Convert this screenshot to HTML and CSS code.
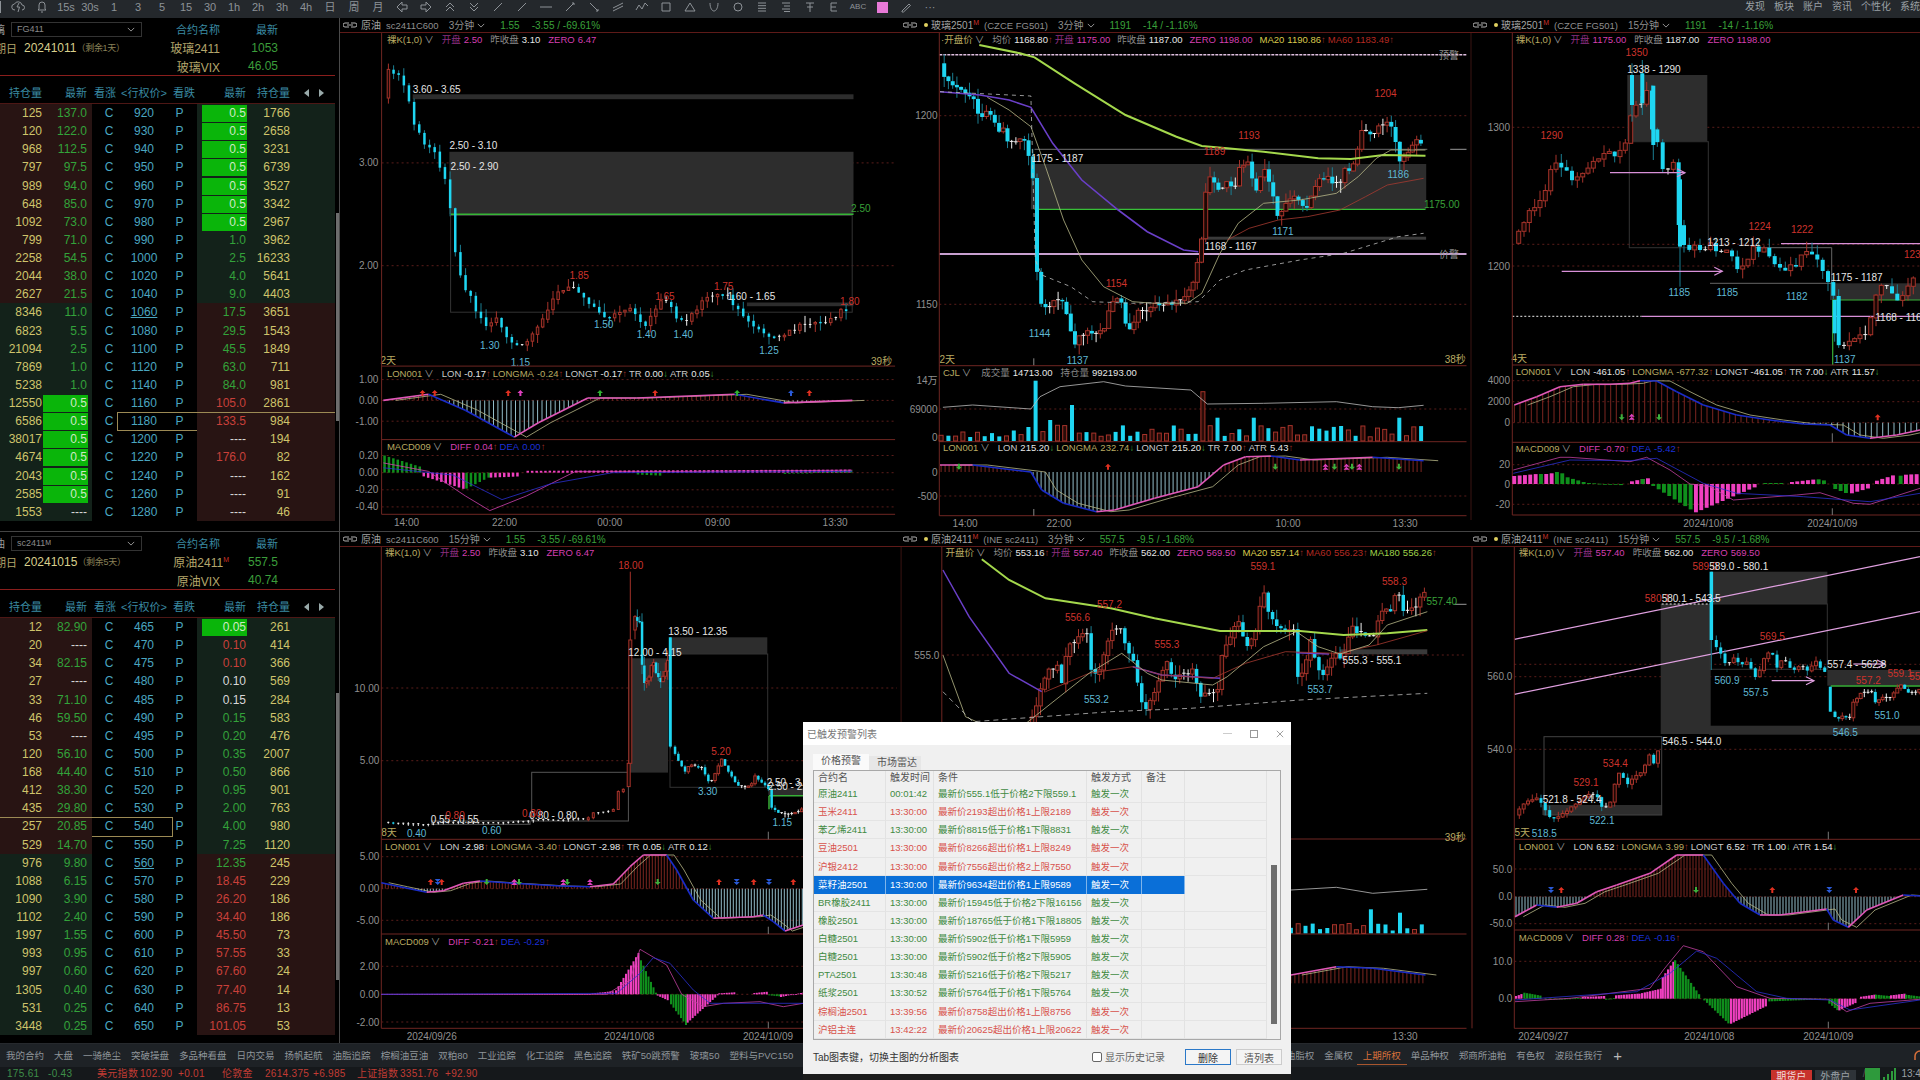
FILE: index.html
```html
<!DOCTYPE html>
<html lang="zh-CN">
<head>
<meta charset="utf-8">
<title>期权行情</title>
<link rel="stylesheet" href="styles.css">
</head>
<body>
<div class="app">
  <header class="toolbar">
    <span class="tick"></span>
    <span class="tb"><svg class="ic" viewBox="0 0 14 12"><path d="M4 9a3 3 0 0 1-.5-6A4 4 0 0 1 11 4a2.5 2.5 0 0 1 0 5M8 2 6 6h2.5L7 11"/></svg></span>
    <span class="tb"><svg class="ic" viewBox="0 0 14 12"><path d="M7 1a3 3 0 0 1 3 3v4l1 1H3l1-1V4a3 3 0 0 1 3-3ZM6 11h2"/></svg></span>
    <span class="tb">15s</span><span class="tb">30s</span><span class="tb">1</span><span class="tb">3</span><span class="tb">5</span><span class="tb">15</span><span class="tb">30</span><span class="tb">1h</span><span class="tb">2h</span><span class="tb">3h</span><span class="tb">4h</span><span class="tb">日</span><span class="tb">周</span><span class="tb">月</span>
    <span class="tb"><svg class="ic" viewBox="0 0 14 12"><path d="M7 1 2 6l5 5V8h5V4H7Z"/></svg></span>
    <span class="tb"><svg class="ic" viewBox="0 0 14 12"><path d="m7 1 5 5-5 5V8H2V4h5Z"/></svg></span>
    <span class="tb"><svg class="ic" viewBox="0 0 14 12"><path d="M3 6l4-4 4 4M3 10l4-4 4 4"/></svg></span>
    <span class="tb"><svg class="ic" viewBox="0 0 14 12"><path d="M3 2l4 4 4-4M3 6l4 4 4-4"/></svg></span>
    <span class="tb"><svg class="ic" viewBox="0 0 14 12"><path d="M3 10 11 2"/></svg></span>
    <span class="tb"><svg class="ic" viewBox="0 0 14 12"><path d="M3 10 11 2"/></svg></span>
    <span class="tb"><svg class="ic" viewBox="0 0 14 12"><path d="M1 6h12"/></svg></span>
    <span class="tb"><svg class="ic" viewBox="0 0 14 12"><path d="M3 10 11 2M9 2h2v2"/></svg></span>
    <span class="tb"><svg class="ic" viewBox="0 0 14 12"><path d="M3 2l8 8M9 10h2V8"/></svg></span>
    <span class="tb"><svg class="ic" viewBox="0 0 14 12"><path d="M2 7 12 2M2 10 12 5"/></svg></span>
    <span class="tb"><svg class="ic" viewBox="0 0 14 12"><path d="M1 9 4 4l3 4 3-6 3 3"/></svg></span>
    <span class="tb"><svg class="ic" viewBox="0 0 14 12"><path d="M3 2h8v8H3Z"/></svg></span>
    <span class="tb"><svg class="ic" viewBox="0 0 14 12"><path d="M7 2l5 8H2Z"/></svg></span>
    <span class="tb"><svg class="ic" viewBox="0 0 14 12"><path d="M3 2c0 5 2 8 4 8s4-3 4-8"/></svg></span>
    <span class="tb"><svg class="ic" viewBox="0 0 14 12"><circle cx="7" cy="6" r="4"/></svg></span>
    <span class="tb"><svg class="ic" viewBox="0 0 14 12"><path d="M3 2h8M3 4.700h8M3 7.300h8M3 10h8"/></svg></span>
    <span class="tb"><svg class="ic" viewBox="0 0 14 12"><path d="M3 2h8M5 5h6M3 8h8M5 10.500h6"/></svg></span>
    <span class="tb"><svg class="ic" viewBox="0 0 14 12"><path d="M3 2h8M7 2v9M4 6h6"/></svg></span>
    <span class="tb"><svg class="ic" viewBox="0 0 14 12"><path d="M4 2v8M4 2h6M4 6h5M4 10h6"/></svg></span>
    <span class="tb tb-sm">ABC</span>
    <span class="tb"><i class="swatch"></i></span>
    <span class="tb"><svg class="ic" viewBox="0 0 14 12"><path d="M3 10 10 3l1.500 1.500L4.500 11 3 11Z"/></svg></span>
    <span class="tb">···</span>
    <nav class="menu"><span>发现</span><span>板块</span><span>账户</span><span>资讯</span><span>个性化</span><span>系统工具</span></nav>
  </header>

  <main class="board">
    <section class="opt">
      <div class="opt-head">
        <div class="h-c1"><span class="cut">玻璃</span><span class="dd">FG411<svg class="chev" viewBox="0 0 10 6"><path d="M1 1l4 4 4-4"/></svg></span></div>
        <div class="h-c2 hcol">合约名称</div><div class="h-c3 hcol">最新</div>
        <div class="h-c1"><span class="cut2">到期日</span><span class="date">20241011</span><span class="rem">（剩余1天）</span></div>
        <div class="h-c2 tan">玻璃2411</div><div class="h-c3 grn-t">1053</div>
        <div class="h-c1"></div>
        <div class="h-c2 tan">玻璃VIX</div><div class="h-c3 grn-t">46.05</div>
      </div>
      <div class="row hrow"><div class="side"><span class="oi">持仓量</span><span class="ltp">最新</span></div><span class="cp">看涨</span><span class="k">&lt;行权价&gt;</span><span class="cp">看跌</span><div class="side rside"><span class="ltp">最新</span><span class="oi">持仓量</span><svg class="pg" viewBox="0 0 20 8"><path d="M5 0v8L0 4ZM15 0v8l5-4Z"/></svg></div></div>
      <div class="rows">
        <div class="row"><div class="side red"><span class="oi">125</span><span class="ltp g">137.0</span></div><span class="cp">C</span><span class="k">920</span><span class="cp">P</span><div class="side rside grn"><span class="ltp hi">0.5</span><span class="oi">1766</span></div></div>
        <div class="row"><div class="side red"><span class="oi">120</span><span class="ltp g">122.0</span></div><span class="cp">C</span><span class="k">930</span><span class="cp">P</span><div class="side rside grn"><span class="ltp hi">0.5</span><span class="oi">2658</span></div></div>
        <div class="row"><div class="side red"><span class="oi">968</span><span class="ltp g">112.5</span></div><span class="cp">C</span><span class="k">940</span><span class="cp">P</span><div class="side rside grn"><span class="ltp hi">0.5</span><span class="oi">3231</span></div></div>
        <div class="row"><div class="side red"><span class="oi">797</span><span class="ltp g">97.5</span></div><span class="cp">C</span><span class="k">950</span><span class="cp">P</span><div class="side rside grn"><span class="ltp hi">0.5</span><span class="oi">6739</span></div></div>
        <div class="row"><div class="side red"><span class="oi">989</span><span class="ltp g">94.0</span></div><span class="cp">C</span><span class="k">960</span><span class="cp">P</span><div class="side rside grn"><span class="ltp hi">0.5</span><span class="oi">3527</span></div></div>
        <div class="row"><div class="side red"><span class="oi">648</span><span class="ltp g">85.0</span></div><span class="cp">C</span><span class="k">970</span><span class="cp">P</span><div class="side rside grn"><span class="ltp hi">0.5</span><span class="oi">3342</span></div></div>
        <div class="row"><div class="side red"><span class="oi">1092</span><span class="ltp g">73.0</span></div><span class="cp">C</span><span class="k">980</span><span class="cp">P</span><div class="side rside grn"><span class="ltp hi">0.5</span><span class="oi">2967</span></div></div>
        <div class="row"><div class="side red"><span class="oi">799</span><span class="ltp g">71.0</span></div><span class="cp">C</span><span class="k">990</span><span class="cp">P</span><div class="side rside grn"><span class="ltp g">1.0</span><span class="oi">3962</span></div></div>
        <div class="row"><div class="side red"><span class="oi">2258</span><span class="ltp g">54.5</span></div><span class="cp">C</span><span class="k">1000</span><span class="cp">P</span><div class="side rside grn"><span class="ltp g">2.5</span><span class="oi">16233</span></div></div>
        <div class="row"><div class="side red"><span class="oi">2044</span><span class="ltp g">38.0</span></div><span class="cp">C</span><span class="k">1020</span><span class="cp">P</span><div class="side rside grn"><span class="ltp g">4.0</span><span class="oi">5641</span></div></div>
        <div class="row"><div class="side red"><span class="oi">2627</span><span class="ltp g">21.5</span></div><span class="cp">C</span><span class="k">1040</span><span class="cp">P</span><div class="side rside grn"><span class="ltp g">9.0</span><span class="oi">4403</span></div></div>
        <div class="row"><div class="side grn"><span class="oi">8346</span><span class="ltp g">11.0</span></div><span class="cp">C</span><span class="k atm">1060</span><span class="cp">P</span><div class="side rside red"><span class="ltp g">17.5</span><span class="oi">3651</span></div></div>
        <div class="row"><div class="side grn"><span class="oi">6823</span><span class="ltp g">5.5</span></div><span class="cp">C</span><span class="k">1080</span><span class="cp">P</span><div class="side rside red"><span class="ltp g">29.5</span><span class="oi">1543</span></div></div>
        <div class="row"><div class="side grn"><span class="oi">21094</span><span class="ltp g">2.5</span></div><span class="cp">C</span><span class="k">1100</span><span class="cp">P</span><div class="side rside red"><span class="ltp g">45.5</span><span class="oi">1849</span></div></div>
        <div class="row"><div class="side grn"><span class="oi">7869</span><span class="ltp g">1.0</span></div><span class="cp">C</span><span class="k">1120</span><span class="cp">P</span><div class="side rside red"><span class="ltp g">63.0</span><span class="oi">711</span></div></div>
        <div class="row"><div class="side grn"><span class="oi">5238</span><span class="ltp g">1.0</span></div><span class="cp">C</span><span class="k">1140</span><span class="cp">P</span><div class="side rside red"><span class="ltp g">84.0</span><span class="oi">981</span></div></div>
        <div class="row"><div class="side grn"><span class="oi">12550</span><span class="ltp hi">0.5</span></div><span class="cp">C</span><span class="k">1160</span><span class="cp">P</span><div class="side rside red"><span class="ltp r">105.0</span><span class="oi">2861</span></div></div>
        <div class="row sel-put"><div class="side grn"><span class="oi">6586</span><span class="ltp hi">0.5</span></div><span class="cp">C</span><span class="k">1180</span><span class="cp">P</span><div class="side rside red"><span class="ltp r">133.5</span><span class="oi">984</span></div></div>
        <div class="row"><div class="side grn"><span class="oi">38017</span><span class="ltp hi">0.5</span></div><span class="cp">C</span><span class="k">1200</span><span class="cp">P</span><div class="side rside red"><span class="ltp w">----</span><span class="oi">194</span></div></div>
        <div class="row"><div class="side grn"><span class="oi">4674</span><span class="ltp hi">0.5</span></div><span class="cp">C</span><span class="k">1220</span><span class="cp">P</span><div class="side rside red"><span class="ltp r">176.0</span><span class="oi">82</span></div></div>
        <div class="row"><div class="side grn"><span class="oi">2043</span><span class="ltp hi">0.5</span></div><span class="cp">C</span><span class="k">1240</span><span class="cp">P</span><div class="side rside red"><span class="ltp w">----</span><span class="oi">162</span></div></div>
        <div class="row"><div class="side grn"><span class="oi">2585</span><span class="ltp hi">0.5</span></div><span class="cp">C</span><span class="k">1260</span><span class="cp">P</span><div class="side rside red"><span class="ltp w">----</span><span class="oi">91</span></div></div>
        <div class="row"><div class="side grn"><span class="oi">1553</span><span class="ltp w">----</span></div><span class="cp">C</span><span class="k">1280</span><span class="cp">P</span><div class="side rside red"><span class="ltp w">----</span><span class="oi">46</span></div></div>
      </div>
      <span class="sb sb-top"></span>
    </section>

    <section class="panel">
      <div class="title"><svg class="link" viewBox="0 0 14 6"><path d="M6 1H2a2 2 0 0 0 0 4h4M8 1h4a2 2 0 0 1 0 4H8M4 3h6"/></svg><span class="t-n">原油</span><span class="t-code">sc2411C600</span><span class="t-per">3分钟<svg class="chev" viewBox="0 0 10 6"><path d="M1 1l4 4 4-4"/></svg></span><span class="t-px">1.55</span><span class="t-chg">-3.55 / -69.61%</span></div>
      <svg class="stage" id="c1"></svg>
    </section>
    <section class="panel">
      <div class="title"><svg class="link" viewBox="0 0 14 6"><path d="M6 1H2a2 2 0 0 0 0 4h4M8 1h4a2 2 0 0 1 0 4H8M4 3h6"/></svg><i class="dot"></i><span class="t-n">玻璃2501<sup>M</sup></span><span class="t-code">(CZCE FG501)</span><span class="t-per">3分钟<svg class="chev" viewBox="0 0 10 6"><path d="M1 1l4 4 4-4"/></svg></span><span class="t-px">1191</span><span class="t-chg">-14 / -1.16%</span></div>
      <svg class="stage" id="c2"></svg>
    </section>
    <section class="panel panel-last">
      <div class="title"><svg class="link" viewBox="0 0 14 6"><path d="M6 1H2a2 2 0 0 0 0 4h4M8 1h4a2 2 0 0 1 0 4H8M4 3h6"/></svg><i class="dot"></i><span class="t-n">玻璃2501<sup>M</sup></span><span class="t-code">(CZCE FG501)</span><span class="t-per">15分钟<svg class="chev" viewBox="0 0 10 6"><path d="M1 1l4 4 4-4"/></svg></span><span class="t-px">1191</span><span class="t-chg">-14 / -1.16%</span></div>
      <svg class="stage" id="c3"></svg>
    </section>

    <section class="opt opt-low">
      <div class="opt-head">
        <div class="h-c1"><span class="cut">原油</span><span class="dd">sc2411<sup>M</sup><svg class="chev" viewBox="0 0 10 6"><path d="M1 1l4 4 4-4"/></svg></span></div>
        <div class="h-c2 hcol">合约名称</div><div class="h-c3 hcol">最新</div>
        <div class="h-c1"><span class="cut2">到期日</span><span class="date">20241015</span><span class="rem">（剩余5天）</span></div>
        <div class="h-c2 tan over">原油2411<sup>M</sup></div><div class="h-c3 grn-t">557.5</div>
        <div class="h-c1"></div>
        <div class="h-c2 tan">原油VIX</div><div class="h-c3 grn-t">40.74</div>
      </div>
      <div class="row hrow"><div class="side"><span class="oi">持仓量</span><span class="ltp">最新</span></div><span class="cp">看涨</span><span class="k">&lt;行权价&gt;</span><span class="cp">看跌</span><div class="side rside"><span class="ltp">最新</span><span class="oi">持仓量</span><svg class="pg" viewBox="0 0 20 8"><path d="M5 0v8L0 4ZM15 0v8l5-4Z"/></svg></div></div>
      <div class="rows">
        <div class="row"><div class="side red"><span class="oi">12</span><span class="ltp g">82.90</span></div><span class="cp">C</span><span class="k">465</span><span class="cp">P</span><div class="side rside grn"><span class="ltp hi">0.05</span><span class="oi">261</span></div></div>
        <div class="row"><div class="side red"><span class="oi">20</span><span class="ltp w">----</span></div><span class="cp">C</span><span class="k">470</span><span class="cp">P</span><div class="side rside grn"><span class="ltp r">0.10</span><span class="oi">414</span></div></div>
        <div class="row"><div class="side red"><span class="oi">34</span><span class="ltp g">82.15</span></div><span class="cp">C</span><span class="k">475</span><span class="cp">P</span><div class="side rside grn"><span class="ltp r">0.10</span><span class="oi">366</span></div></div>
        <div class="row"><div class="side red"><span class="oi">27</span><span class="ltp w">----</span></div><span class="cp">C</span><span class="k">480</span><span class="cp">P</span><div class="side rside grn"><span class="ltp w">0.10</span><span class="oi">569</span></div></div>
        <div class="row"><div class="side red"><span class="oi">33</span><span class="ltp g">71.10</span></div><span class="cp">C</span><span class="k">485</span><span class="cp">P</span><div class="side rside grn"><span class="ltp w">0.15</span><span class="oi">284</span></div></div>
        <div class="row"><div class="side red"><span class="oi">46</span><span class="ltp g">59.50</span></div><span class="cp">C</span><span class="k">490</span><span class="cp">P</span><div class="side rside grn"><span class="ltp g">0.15</span><span class="oi">583</span></div></div>
        <div class="row"><div class="side red"><span class="oi">53</span><span class="ltp w">----</span></div><span class="cp">C</span><span class="k">495</span><span class="cp">P</span><div class="side rside grn"><span class="ltp g">0.20</span><span class="oi">476</span></div></div>
        <div class="row"><div class="side red"><span class="oi">120</span><span class="ltp g">56.10</span></div><span class="cp">C</span><span class="k">500</span><span class="cp">P</span><div class="side rside grn"><span class="ltp g">0.35</span><span class="oi">2007</span></div></div>
        <div class="row"><div class="side red"><span class="oi">168</span><span class="ltp g">44.40</span></div><span class="cp">C</span><span class="k">510</span><span class="cp">P</span><div class="side rside grn"><span class="ltp g">0.50</span><span class="oi">866</span></div></div>
        <div class="row"><div class="side red"><span class="oi">412</span><span class="ltp g">38.30</span></div><span class="cp">C</span><span class="k">520</span><span class="cp">P</span><div class="side rside grn"><span class="ltp g">0.95</span><span class="oi">901</span></div></div>
        <div class="row"><div class="side red"><span class="oi">435</span><span class="ltp g">29.80</span></div><span class="cp">C</span><span class="k">530</span><span class="cp">P</span><div class="side rside grn"><span class="ltp g">2.00</span><span class="oi">763</span></div></div>
        <div class="row sel-call"><div class="side red"><span class="oi">257</span><span class="ltp g">20.85</span></div><span class="cp">C</span><span class="k">540</span><span class="cp">P</span><div class="side rside grn"><span class="ltp g">4.00</span><span class="oi">980</span></div></div>
        <div class="row"><div class="side red"><span class="oi">529</span><span class="ltp g">14.70</span></div><span class="cp">C</span><span class="k">550</span><span class="cp">P</span><div class="side rside grn"><span class="ltp g">7.25</span><span class="oi">1120</span></div></div>
        <div class="row"><div class="side grn"><span class="oi">976</span><span class="ltp g">9.80</span></div><span class="cp">C</span><span class="k atm">560</span><span class="cp">P</span><div class="side rside red"><span class="ltp g">12.35</span><span class="oi">245</span></div></div>
        <div class="row"><div class="side grn"><span class="oi">1088</span><span class="ltp g">6.15</span></div><span class="cp">C</span><span class="k">570</span><span class="cp">P</span><div class="side rside red"><span class="ltp r">18.45</span><span class="oi">229</span></div></div>
        <div class="row"><div class="side grn"><span class="oi">1090</span><span class="ltp g">3.90</span></div><span class="cp">C</span><span class="k">580</span><span class="cp">P</span><div class="side rside red"><span class="ltp r">26.20</span><span class="oi">186</span></div></div>
        <div class="row"><div class="side grn"><span class="oi">1102</span><span class="ltp g">2.40</span></div><span class="cp">C</span><span class="k">590</span><span class="cp">P</span><div class="side rside red"><span class="ltp r">34.40</span><span class="oi">186</span></div></div>
        <div class="row"><div class="side grn"><span class="oi">1997</span><span class="ltp g">1.55</span></div><span class="cp">C</span><span class="k">600</span><span class="cp">P</span><div class="side rside red"><span class="ltp r">45.50</span><span class="oi">73</span></div></div>
        <div class="row"><div class="side grn"><span class="oi">993</span><span class="ltp g">0.95</span></div><span class="cp">C</span><span class="k">610</span><span class="cp">P</span><div class="side rside red"><span class="ltp r">57.55</span><span class="oi">33</span></div></div>
        <div class="row"><div class="side grn"><span class="oi">997</span><span class="ltp g">0.60</span></div><span class="cp">C</span><span class="k">620</span><span class="cp">P</span><div class="side rside red"><span class="ltp r">67.60</span><span class="oi">24</span></div></div>
        <div class="row"><div class="side grn"><span class="oi">1305</span><span class="ltp g">0.40</span></div><span class="cp">C</span><span class="k">630</span><span class="cp">P</span><div class="side rside red"><span class="ltp r">77.40</span><span class="oi">14</span></div></div>
        <div class="row"><div class="side grn"><span class="oi">531</span><span class="ltp g">0.25</span></div><span class="cp">C</span><span class="k">640</span><span class="cp">P</span><div class="side rside red"><span class="ltp r">86.75</span><span class="oi">13</span></div></div>
        <div class="row"><div class="side grn"><span class="oi">3448</span><span class="ltp g">0.25</span></div><span class="cp">C</span><span class="k">650</span><span class="cp">P</span><div class="side rside red"><span class="ltp r">101.05</span><span class="oi">53</span></div></div>
      </div>
      <span class="sb sb-low"></span>
    </section>

    <section class="panel panel-low">
      <div class="title"><svg class="link" viewBox="0 0 14 6"><path d="M6 1H2a2 2 0 0 0 0 4h4M8 1h4a2 2 0 0 1 0 4H8M4 3h6"/></svg><span class="t-n">原油</span><span class="t-code">sc2411C600</span><span class="t-per">15分钟<svg class="chev" viewBox="0 0 10 6"><path d="M1 1l4 4 4-4"/></svg></span><span class="t-px">1.55</span><span class="t-chg">-3.55 / -69.61%</span></div>
      <svg class="stage" id="c4"></svg>
    </section>
    <section class="panel panel-low">
      <div class="title"><svg class="link" viewBox="0 0 14 6"><path d="M6 1H2a2 2 0 0 0 0 4h4M8 1h4a2 2 0 0 1 0 4H8M4 3h6"/></svg><i class="dot"></i><span class="t-n">原油2411<sup>M</sup></span><span class="t-code">(INE sc2411)</span><span class="t-per">3分钟<svg class="chev" viewBox="0 0 10 6"><path d="M1 1l4 4 4-4"/></svg></span><span class="t-px">557.5</span><span class="t-chg">-9.5 / -1.68%</span></div>
      <svg class="stage" id="c5"></svg>
    </section>
    <section class="panel panel-low panel-last">
      <div class="title"><svg class="link" viewBox="0 0 14 6"><path d="M6 1H2a2 2 0 0 0 0 4h4M8 1h4a2 2 0 0 1 0 4H8M4 3h6"/></svg><i class="dot"></i><span class="t-n">原油2411<sup>M</sup></span><span class="t-code">(INE sc2411)</span><span class="t-per">15分钟<svg class="chev" viewBox="0 0 10 6"><path d="M1 1l4 4 4-4"/></svg></span><span class="t-px">557.5</span><span class="t-chg">-9.5 / -1.68%</span></div>
      <svg class="stage" id="c6"></svg>
    </section>
  </main>

  <nav class="tabs">
    <span class="tab first">我的合约</span><span class="tab">大盘</span><span class="tab">一骑绝尘</span><span class="tab">突破操盘</span><span class="tab">多品种看盘</span><span class="tab">日内交易</span><span class="tab">扬帆起航</span><span class="tab">油脂追踪</span><span class="tab">棕榈油豆油</span><span class="tab">双粕80</span><span class="tab">工业追踪</span><span class="tab">化工追踪</span><span class="tab">黑色追踪</span><span class="tab">铁矿50跳预警</span><span class="tab">玻璃50</span><span class="tab">塑料与PVC150</span>
    <span class="tab push">油脂权</span><span class="tab">金属权</span><span class="tab active">上期所权</span><span class="tab">单品种权</span><span class="tab">郑商所油粕</span><span class="tab">有色权</span><span class="tab">波段任我行</span><span class="tab plus">+</span>
    <svg class="head" viewBox="0 0 14 14"><path d="M2 11V7a5 5 0 0 1 10 0v4"/></svg>
  </nav>

  <footer class="status">
    <span class="st g w-a">175.61</span><span class="st g w-b">-0.43</span>
    <span class="st r w-c">美元指数</span><span class="st r w-d">102.90</span><span class="st r w-e">+0.01</span>
    <span class="st r w-f">伦敦金</span><span class="st r w-g">2614.375</span><span class="st r w-h">+6.985</span>
    <span class="st r w-i">上证指数</span><span class="st r w-j">3351.76</span><span class="st r">+92.90</span>
    <span class="acct acct-on">期货户</span><span class="acct">外盘户</span><span class="slash">/</span>
    <svg class="net" viewBox="0 0 15 12"><path d="M0 0h15v12H0Z"/></svg>
    <svg class="sig" viewBox="0 0 14 12"><path d="M1 9h2v3H1ZM5 6h2v6H5ZM9 3h2v9H9ZM12 0h2v12h-2Z"/></svg>
    <span class="clock">13:42:30</span>
  </footer>

  <div class="modal">
    <div class="m-title"><span>已触发预警列表</span><span class="m-btns"><i class="m-min"></i><i class="m-max"></i><svg class="m-x" viewBox="0 0 10 10"><path d="M1 1l8 8M9 1l-8 8"/></svg></span></div>
    <div class="m-tabs"><span class="m-tab on">价格预警</span><span class="m-tab">市场雷达</span></div>
    <div class="m-table">
      <div class="m-row m-head"><span>合约名</span><span>触发时间</span><span>条件</span><span>触发方式</span><span>备注</span><span></span></div>
      <div class="m-row ok"><span>原油2411</span><span>00:01:42</span><span>最新价555.1低于价格2下限559.1</span><span>触发一次</span><span></span><span></span></div>
      <div class="m-row up"><span>玉米2411</span><span>13:30:00</span><span>最新价2193超出价格1上限2189</span><span>触发一次</span><span></span><span></span></div>
      <div class="m-row ok"><span>苯乙烯2411</span><span>13:30:00</span><span>最新价8815低于价格1下限8831</span><span>触发一次</span><span></span><span></span></div>
      <div class="m-row up"><span>豆油2501</span><span>13:30:00</span><span>最新价8266超出价格1上限8249</span><span>触发一次</span><span></span><span></span></div>
      <div class="m-row up"><span>沪银2412</span><span>13:30:00</span><span>最新价7556超出价格2上限7550</span><span>触发一次</span><span></span><span></span></div>
      <div class="m-row sel"><span>菜籽油2501</span><span>13:30:00</span><span>最新价9634超出价格1上限9589</span><span>触发一次</span><span></span><span></span></div>
      <div class="m-row ok"><span>BR橡胶2411</span><span>13:30:00</span><span>最新价15945低于价格2下限16156</span><span>触发一次</span><span></span><span></span></div>
      <div class="m-row ok"><span>橡胶2501</span><span>13:30:00</span><span>最新价18765低于价格1下限18805</span><span>触发一次</span><span></span><span></span></div>
      <div class="m-row ok"><span>白糖2501</span><span>13:30:00</span><span>最新价5902低于价格1下限5959</span><span>触发一次</span><span></span><span></span></div>
      <div class="m-row ok"><span>白糖2501</span><span>13:30:00</span><span>最新价5902低于价格2下限5905</span><span>触发一次</span><span></span><span></span></div>
      <div class="m-row ok"><span>PTA2501</span><span>13:30:48</span><span>最新价5216低于价格2下限5217</span><span>触发一次</span><span></span><span></span></div>
      <div class="m-row ok"><span>纸浆2501</span><span>13:30:52</span><span>最新价5764低于价格1下限5764</span><span>触发一次</span><span></span><span></span></div>
      <div class="m-row up"><span>棕榈油2501</span><span>13:39:56</span><span>最新价8758超出价格1上限8756</span><span>触发一次</span><span></span><span></span></div>
      <div class="m-row up"><span>沪铝主连</span><span>13:42:22</span><span>最新价20625超出价格1上限20622</span><span>触发一次</span><span></span><span></span></div>
      <span class="m-thumb"></span>
    </div>
    <div class="m-foot"><span class="m-hint">Tab图表键，切换主图的分析图表</span><label class="m-check"><i class="box"></i>显示历史记录</label><button class="m-btn m-btn-on">删除</button><button class="m-btn">清列表</button></div>
  </div>
</div>
<script src="charts.js"></script>
</body>
</html>
```
FILE: styles.css
```css
*{box-sizing:border-box}
html,body{margin:0;height:100%;background:#000;overflow:hidden}
body{font-family:"Liberation Sans","Noto Sans CJK SC",sans-serif;color:#aaa}
.app{width:1920px;height:1080px;display:flex;flex-direction:column;position:relative;overflow:hidden;background:#000}

.toolbar{height:18px;flex:none;background:#24282c;display:flex;align-items:flex-start;color:#8d9297;font-size:11px;line-height:14px;padding-left:0}
.tick{width:6px;height:12px;border-left:1px solid #8d9297;margin-top:1px}
.tb{width:24px;height:14px;flex:none;display:flex;align-items:center;justify-content:center}
.tb-sm{font-size:8px}
.ic{width:14px;height:12px;fill:none;stroke:#8d9297;stroke-width:1}
.swatch{display:block;width:11px;height:11px;background:#e87ad8}
.menu{margin-left:auto;margin-right:-20px;display:flex;gap:9px;font-size:10px;color:#9aa0a5}

.board{flex:1;display:grid;grid-template-columns:340px 560px 570px 450px;grid-template-rows:513px 512px;min-height:0}
.opt{position:relative;border-right:1px solid #4a4a4a;overflow:hidden;display:flex;flex-direction:column}
.opt-low{border-top:1px solid #444}
.opt-head{height:58px;width:335px;flex:none;padding-top:2px;border-bottom:1px solid #8a1e1c;display:grid;grid-template-columns:150px 70px 58px;grid-template-rows:18px 19px 18px;align-items:center;font-size:11px}
.h-c1{display:flex;align-items:center;white-space:nowrap;min-width:0}
.h-c2{text-align:right;white-space:nowrap}
.h-c3{text-align:right;white-space:nowrap;font-size:12px}
.hcol{color:#3a8aa2;font-size:11px}
.tan{color:#b4a66c;font-size:12px}
.over{margin-right:-9px}
.over sup,.dd sup,.t-n sup{font-size:7px;line-height:0;color:#c8322a}
.dd sup{color:#999}
.grn-t{color:#3b9e3b}
.cut{margin-left:-17px;width:22px;flex:none;color:#9a9a9a;font-size:11px}
.dd{margin-left:6px;width:131px;height:15px;border:1px solid #333;display:flex;align-items:center;padding-left:5px;font-size:9px;color:#8a8a8a}
.dd .chev{margin-left:auto;margin-right:6px}
.chev{width:8px;height:5px;fill:none;stroke:#b5b5b5;stroke-width:1;flex:none}
.cut2{margin-left:-16px;width:33px;flex:none;color:#b4a66c;font-size:11px}
.date{margin-left:7px;color:#d8cf8c;font-size:12px}
.rem{color:#8a8058;font-size:9px;letter-spacing:-.3px}

.row{display:flex;height:18.13px;width:335px;font-size:12px;line-height:18px;position:relative;flex:none;white-space:nowrap}
.hrow{height:28px;padding-top:7px;line-height:20px;font-size:11px;color:#3a8aa2;border-bottom:1px solid #4d1715;flex:none;align-items:flex-start}
.hrow .oi,.hrow .cp,.hrow .k{color:#3a8aa2}
.hrow .cp{padding-right:8px}
.hrow .k+.cp{padding:0 0 0 9px}
.rows{display:flex;flex-direction:column}
.side{display:flex;width:92px;flex:none}
.rside{width:138px;padding-left:5px}
.red{background:#281413}
.grn{background:#13221a}
.oi{width:43px;text-align:right;padding-right:1px;color:#cfc46b;flex:none}
.rside .oi{padding-right:0}
.ltp{width:45px;text-align:right;padding-right:1px;flex:none}
.g{color:#33a33a}
.r{color:#c9403a}
.w{color:#d8d8d8}
.hi{background:#0ab50a;color:#cfe8c4;height:17px;line-height:17px;margin-top:1px}
.cp{width:34px;text-align:center;color:#4aa6c0;flex:none}
.k{width:36px;text-align:center;color:#4aa6c0;flex:none;display:flex;justify-content:center}
.atm{text-decoration:underline}
.cp+.k+.cp{width:35px}
.pg{width:20px;height:8px;fill:#9aa;margin:6px 0 0 14px;flex:none}
.sel-put::after{content:"";position:absolute;left:117px;right:0;top:0;bottom:-1px;border:1px solid #9c8a54;border-right:0;pointer-events:none}
.sel-call::after{content:"";position:absolute;left:0;width:172px;top:0;bottom:-1px;border:1px solid #9c8a54;border-left:0;pointer-events:none}
.sb{position:absolute;left:336px;width:3px;background:#6d6d6d}
.sb-top{top:195px;height:208px}
.sb-low{top:161px;height:287px}

.panel{display:flex;flex-direction:column;min-width:0;overflow:hidden;position:relative}
.panel-low{border-top:1px solid #444}
.title{height:15px;flex:none;border-bottom:1px solid #5e1a18;display:flex;align-items:center;padding-left:3px;font-size:10px;color:#8f8f8f;white-space:nowrap;line-height:13px}
.link{width:14px;height:6px;fill:none;stroke:#b0b0b0;stroke-width:1;flex:none}
.dot{width:4px;height:4px;border-radius:50%;background:#e0d060;margin-left:7px;flex:none}
.t-n{margin-left:3px;color:#a3a3a3;font-size:10px}
.link+.t-n{margin-left:4px}
.t-code{margin-left:5px;font-size:9.500px}
.t-per{margin-left:10px;display:flex;align-items:center;gap:3px}
.t-px{margin-left:15px;color:#3aa03a;font-size:10px}
.t-chg{margin-left:12px;color:#3aa03a;font-size:10px}
.stage{flex:1;display:block;width:100%;min-height:0;font-size:10px}
.stage text{font-family:"Liberation Sans","Noto Sans CJK SC",sans-serif}

.tabs{height:24px;flex:none;background:#1e2226;display:flex;align-items:stretch;font-size:9.500px;color:#8f959a;line-height:23px;white-space:nowrap;border-top:1px solid #26292d}
.tab{padding:0 5px;flex:none}
.tab.first{margin-left:1px}
.push{margin-left:auto}
.active{color:#d8703a;border-bottom:1px solid #a8562e;padding:0 6px;margin:0 -1px 2px}
.plus{font-size:15px;color:#b8b8b8;padding:0 4px 0 6px}
.head{width:14px;height:14px;margin:5px -7px 0 287px;fill:none;stroke:#d8703a;stroke-width:1.500;flex:none}

.status{height:13px;flex:none;background:#15181b;display:flex;align-items:center;font-size:10px;line-height:13px;white-space:nowrap;overflow:hidden;padding-left:7px}
.st{flex:none;letter-spacing:.3px}
.st.g{color:#3f8f4a}.st.r{color:#c23c34}
.w-a{width:41px}.w-b{width:49px}.w-c{width:43px}.w-d{width:38px}.w-e{width:44px}.w-f{width:43px}.w-g{width:48px}.w-h{width:44px}.w-i{width:43px}.w-j{width:45px}
.acct{width:41px;height:14px;margin:3px 0 -3px 3px;text-align:center;background:#2e3338;color:#9aa0a6;font-size:10px;flex:none}
.acct-on{margin-left:1293px;background:#c8322c;color:#f0dada}
.slash{margin-left:7px;color:#555;width:11px}
.net{width:15px;height:12px;fill:#2e9a3c;flex:none}
.sig{width:14px;height:12px;fill:#2e9a3c;margin-left:2px;flex:none}
.clock{margin-left:5px;color:#9aa0a6}

.modal{position:absolute;left:803px;top:722px;width:488px;height:352px;background:#f0f0f0;display:flex;flex-direction:column;color:#222;font-size:10px;box-shadow:0 6px 0 #1c1c1c}
.m-title{height:23px;flex:none;background:#fff;display:flex;align-items:center;justify-content:space-between;padding:0 7px 0 4px;color:#777;font-size:10px}
.m-btns{display:flex;align-items:center;gap:18px}
.m-min{display:block;width:9px;height:1px;background:#ccc}
.m-max{display:block;width:8px;height:8px;border:1px solid #999}
.m-x{width:8px;height:8px;stroke:#888;stroke-width:1;fill:none}
.m-tabs{margin:8px 10px 0;height:17px;flex:none;display:flex;align-items:flex-end;color:#555;font-size:10px}
.m-tab{height:14px;padding:0 8px;background:#e7e7e7;line-height:13px;width:52px;text-align:center;white-space:nowrap}
.m-tab.on{height:16px;width:56px;background:#fafafa;line-height:14px}
.m-table{margin:0 10px;height:270px;flex:none;border:1px solid #a8a8a8;background:#f0f0f0;position:relative}
.m-row{display:grid;grid-template-columns:72px 48px 153px 55px 43px 82px;height:18.130px;line-height:17px;font-size:9.500px;white-space:nowrap}
.m-row span{padding-left:4px;border-right:1px solid #e2e2e2;border-bottom:1px solid #e4e4e4;overflow:hidden}
.m-head{height:14px;line-height:13px;color:#555;font-size:10px}
.m-head span{border-bottom:0}
.ok{color:#3f8a42}.up{color:#d8524c}
.sel{color:#fff;grid-template-columns:72px 48px 153px 55px 43px 82px}
.sel span{background:#0a6fd8;border-right-color:#7fb4ea;border-bottom:0}
.sel span:last-child{background:none;border-right-color:#e2e2e2}
.m-thumb{position:absolute;left:457px;top:94px;width:6px;height:159px;background:#6d6d6d}
.m-foot{flex:1;display:flex;align-items:center;padding:0 10px 1px;color:#333;font-size:10px}
.m-hint{width:279px;flex:none}
.m-check{display:flex;align-items:center;gap:3px;color:#666;width:93px;flex:none;white-space:nowrap}
.box{display:block;width:10px;height:10px;border:1px solid #666;border-radius:2px;background:#fff}
.m-btn{font:inherit;height:16px;width:46px;padding:0;background:#f4f4f4;border:1px solid #ccc;color:#555;margin-right:5px;flex:none}
.m-btn-on{border-color:#2a78c8;color:#333}
```
FILE: charts.js
```js
(function () {
  var C = { frame: '#6e2622', grid: '#5a1d1a', cy: '#1fd6f2', up: '#a5332a', ax: '#909090', red: '#cc332c', blue: '#5fb8d4', wh: '#e6e6e6', tan: '#b9aa62', pink: '#d9a0e0', gray: '#2d2d2d', mag: '#d43fb0' };
  var THIN = '#b8b888', DASH = '#bbbbbb';

  function chart(id, ox, oy, sx, sy, sd) {
    var svg = document.getElementById(id), r = svg.getBoundingClientRect(), s = '', seed = sd;
    function rnd() { seed = (seed * 16807) % 2147483647; return seed / 2147483647; }
    function X(x) { return ox + x / sx; }
    function Y(y) { return oy + y / sy; }
    function f(v) { return (+v).toFixed(1); }
    function ip(p, x) {
      if (x <= p[0][0]) return p[0][1];
      for (var i = 1; i < p.length; i++) {
        if (x <= p[i][0]) {
          var a = p[i - 1], b = p[i], d = b[0] - a[0];
          return d ? a[1] + (b[1] - a[1]) * (x - a[0]) / d : b[1];
        }
      }
      return p[p.length - 1][1];
    }
    var o = {
      line: function (p, c, w, d) {
        var a = p.map(function (q) { return f(X(q[0])) + ',' + f(Y(q[1])); }).join(' ');
        s += '<polyline points="' + a + '" fill="none" stroke="' + c + '" stroke-width="' + (w || 0.8) + '"' + (d ? ' stroke-dasharray="' + d + '"' : '') + '/>';
      },
      h: function (y, a, b, c, w, d) { o.line([[a, y], [b, y]], c, w || 1, d); },
      v: function (x, a, b, c, w, d) { o.line([[x, a], [x, b]], c, w || 1, d); },
      box: function (x, y, w, h, c, st) {
        s += '<rect x="' + f(X(x)) + '" y="' + f(Y(y)) + '" width="' + f(w / sx) + '" height="' + f(h / sy) + '" fill="' + (c || 'none') + '"' + (st ? ' stroke="' + st + '"' : '') + '/>';
      },
      t: function (x, y, str, c, a, z) {
        s += '<text x="' + f(X(x)) + '" y="' + f(Y(y) + 3.5) + '" fill="' + c + '" text-anchor="' + (a || 'middle') + '" font-size="' + (z || 10) + '">' + str + '</text>';
      },
      leg: function (x, y, items) {
        var b = '<text x="' + f(X(x)) + '" y="' + f(Y(y) + 3.5) + '" font-size="9.5">';
        items.forEach(function (it, i) {
          b += '<tspan fill="' + it[1] + '" dx="' + (it[2] === undefined ? (i ? 3 : 0) : it[2]) + '">' + it[0] + '</tspan>';
        });
        s += b + '</text>';
      },
      frame: function (xl, xr, ys) {
        o.v(xl, ys[0], ys[ys.length - 1], C.frame);
        ys.slice(1).forEach(function (y) { o.h(y, xl, xr, C.frame); });
      },
      axis: function (xl, xr, y, str, lx) {
        o.h(y, xl, xr, C.grid, 1, '2 3');
        o.t(lx, y, str, C.ax, 'end');
      },
      candle: function (x, a, b, hi, lo, w) {
        var px = X(x), y0 = Y(Math.min(a, b)), y1 = Y(Math.max(a, b)), wk = Y(hi), wl = Y(lo), dn = b > a;
        if (y1 - y0 < 1.3) {
          s += '<path d="M' + f(px) + ' ' + f(wk) + 'V' + f(wl) + 'M' + f(px - w / 2) + ' ' + f(y0) + 'H' + f(px + w / 2) + '" stroke="#f0f0f0" fill="none"/>';
        } else if (dn) {
          s += '<path d="M' + f(px) + ' ' + f(wk) + 'V' + f(wl) + '" stroke="#1b7e92" fill="none"/>';
          s += '<rect x="' + f(px - w / 2) + '" y="' + f(y0) + '" width="' + w + '" height="' + f(y1 - y0) + '" fill="' + C.cy + '"/>';
        } else {
          s += '<path d="M' + f(px) + ' ' + f(wk) + 'V' + f(wl) + '" stroke="' + C.up + '" fill="none"/>';
          s += '<rect x="' + f(px - w / 2) + '" y="' + f(y0) + '" width="' + w + '" height="' + f(y1 - y0) + '" fill="#1c0805" stroke="' + C.up + '"/>';
        }
      },
      candles: function (p, dx, w, nz, wk) {
        var prev = p[0][1], end = p[p.length - 1][0];
        for (var x = p[0][0] + dx; x <= end; x += dx) {
          var c = ip(p, x) + (rnd() - 0.5) * nz;
          var hi = Math.min(prev, c) - rnd() * wk, lo = Math.max(prev, c) + rnd() * wk;
          o.candle(x, prev, c, hi, lo, w);
          prev = c + (rnd() - 0.5) * nz * 0.25;
        }
      },
      hist: function (a, b, dx, base, p, up, dn) {
        for (var x = a; x <= b; x += dx) {
          var y = ip(p, x);
          o.v(x, base, y, y < base ? up : dn);
        }
      },
      lon: function (a, b, dx, base, p, sh) {
        o.hist(a, b, dx, base, p, '#7c2620', '#93bcc8');
        var q = p.map(function (z) { return [z[0] + sh, z[1]]; });
        o.line(q, THIN, 0.8);
        for (var i = 1; i < p.length; i++) {
          o.line([p[i - 1], p[i]], p[i][1] > p[i - 1][1] ? '#1a2cc8' : '#e058b8', 1.6);
        }
      },
      bars: function (base, dx, w, segs) {
        segs.forEach(function (g) {
          for (var x = g[0]; x <= g[1]; x += dx) {
            var t = g[1] === g[0] ? 0 : (x - g[0]) / (g[1] - g[0]), h = g[2] + (g[3] - g[2]) * t;
            var c = g[4] === 'g' ? '#0f8f1c' : '#f040c0';
            var y0 = h > 0 ? base - h : base, yy = Math.abs(h);
            s += '<rect x="' + f(X(x)) + '" y="' + f(Y(y0)) + '" width="' + w + '" height="' + f(Math.max(yy / sy, 0.8)) + '" fill="' + c + '"/>';
          }
        });
      },
      vol: function (a, b, dx, base, max, w, spikes) {
        for (var x = a; x <= b; x += dx) {
          var h = max * (0.25 + rnd() * 0.75), up = rnd() > 0.5, px = f(X(x) - w / 2);
          for (var k = 0; k < spikes.length; k++) if (Math.abs(spikes[k][0] - x) <= dx / 2) { h = spikes[k][1]; up = spikes[k][2]; }
          s += '<rect x="' + px + '" y="' + f(Y(base - h)) + '" width="' + w + '" height="' + f(h / sy) + '" fill="' + (up ? '#2a0c08' : C.cy) + '"' + (up ? ' stroke="' + C.up + '"' : '') + '/>';
        }
      },
      mark: function (x, y, c, dir, dbl) {
        var px = X(x), py = Y(y), d = dir === 'd' ? 1 : -1, b = '';
        var tri = function (yy) { return 'M' + f(px - 3) + ' ' + f(yy) + 'L' + f(px) + ' ' + f(yy + d * 3) + 'L' + f(px + 3) + ' ' + f(yy) + 'Z'; };
        b = tri(py) + (dbl ? tri(py - d * 3) : 'M' + f(px - 1) + ' ' + f(py) + 'h2v' + f(-d * 3) + 'h-2Z');
        s += '<path d="' + b + '" fill="' + c + '"/>';
      },
      arrow: function (a, b, y, c) {
        o.h(y, a, b, c, 1.2);
        var hx = 8 / 1;
        s += '<path d="M' + f(X(b) - hx) + ' ' + f(Y(y) - 4) + 'L' + f(X(b)) + ' ' + f(Y(y)) + 'L' + f(X(b) - hx) + ' ' + f(Y(y) + 4) + '" fill="none" stroke="' + c + '" stroke-width="1.2"/>';
      },
      done: function () {
        svg.innerHTML = '<g transform="translate(' + (-r.left) + ',' + (-r.top) + ')">' + s + '</g>';
      }
    };
    return o;
  }

  var dim = '#8a8a8a', tan = C.tan, wh = C.wh, mg = C.mag, dmg = '#8d2f80', yel = '#d9c84c', rd = '#b52a22', gn = '#3aa03a', chev = ['∨', '#999', 2];
  function ups(c) { return ['↑', c || '#a03028', 0]; }
  function dns() { return ['↓', gn, 0]; }
  function lonLeg(a, b, c, d, e, ar) {
    return [['LON001', tan], chev, ['LON', '#c8c8c8', 8], [a, wh], ar[0] ? ups() : dns(), ['LONGMA', tan, 2], [b, tan], ar[1] ? ups() : dns(), ['LONGT', '#c8c8c8', 2], [c, wh], ar[2] ? ups() : dns(), ['TR', '#c8c8c8', 2], [d, wh], ar[3] ? ups() : dns(), ['ATR', '#c8c8c8', 2], [e, wh], ar[4] ? ups() : dns()];
  }
  function macdLeg(a, b) {
    return [['MACD009', tan], chev, ['DIFF', mg, 8], [a, mg], ups(), ['DEA', '#1c30d8', 2], [b, '#1c30d8'], ups()];
  }
  function kLeg(o, p, z) {
    return [['裸K(1,0)', tan], chev, ['开盘', dmg, 8], [o, mg], ['昨收盘', dim, 8], [p, wh], ['ZERO', mg, 8], [z, mg]];
  }

  /* ---- top left chart: shrunk-coordinate mapping ---- */
  (function () {
    var k = 1 / 1.2245, g = chart('c1', 0, 0, k, k, 4711);
    var xl = 311.6, xr = 731;
    g.axis(xl, xr, 133, '3.00', 309); g.axis(xl, xr, 217, '2.00', 309);
    g.box(337, 77, 360, 4, C.gray);
    g.box(367, 124, 330, 51, C.gray);
    g.box(610, 247, 87, 3, C.gray);
    g.box(368, 176, 328, 79, null, '#333');
    g.h(175, 368, 697, '#36b536', 1.5);
    g.candles([[313, 80], [318, 55], [325, 62], [332, 72], [338, 100], [345, 115], [355, 125], [363, 145], [369, 176], [372, 210], [380, 235], [395, 265], [405, 260], [417, 280], [425, 285], [440, 265], [455, 240], [470, 235], [485, 250], [497, 262], [512, 250], [527, 265], [542, 245], [558, 265], [575, 245], [592, 240], [610, 260], [625, 275], [640, 272], [655, 265], [675, 262], [695, 250]], 4.2, 2.5, 5, 7);
    [['3.60 - 3.65', 337, 73], ['2.50 - 3.10', 367, 119], ['2.50 - 2.90', 368, 136], ['1.60 - 1.65', 594, 242]].forEach(function (a) { g.t(a[1], a[2], a[0], wh, 'start'); });
    [['1.85', 473, 225], ['1.65', 543, 242], ['1.75', 591, 234], ['1.80', 694, 246]].forEach(function (a) { g.t(a[1], a[2], a[0], C.red); });
    [['1.30', 400, 282], ['1.50', 493, 265], ['1.40', 528, 273], ['1.40', 558, 273], ['1.25', 628, 286], ['1.15', 425, 296]].forEach(function (a) { g.t(a[1], a[2], a[0], C.blue); });
    g.t(703, 170, '2.50', gn);
    g.t(317, 294, '2天', tan); g.t(720, 295, '39秒', tan);
    g.leg(316, 32, kLeg('2.50', '3.10', '6.47'));
    g.frame(xl, xr, [27, 299, 359, 420]);
    g.leg(316, 305, lonLeg('-0.17', '-0.24', '-0.17', '0.00', '0.05', [1, 1, 1, 0, 0]));
    g.axis(xl, xr, 310, '1.00', 309); g.axis(xl, xr, 327, '0.00', 309); g.axis(xl, xr, 344, '-1.00', 309);
    g.lon(313, 696, 3.6, 327, [[313, 327], [350, 322], [380, 335], [420, 357], [440, 345], [480, 325], [520, 325], [600, 322], [640, 329], [696, 327]], 10);
    [[345, 'r'], [355, 'r'], [415, 'r'], [425, 'p'], [490, 'g'], [535, 'r'], [602, 'g'], [646, 'b'], [661, 'r']].forEach(function (a) {
      g.mark(a[0], 321, a[1] === 'r' ? '#e03020' : a[1] === 'g' ? '#30b030' : a[1] === 'b' ? '#2a5ad8' : '#e040c0', 'u');
    });
    g.leg(316, 365, macdLeg('0.04', '0.00'));
    g.axis(xl, xr, 372, '0.20', 309); g.axis(xl, xr, 386, '0.00', 309); g.axis(xl, xr, 400, '-0.20', 309); g.axis(xl, xr, 414, '-0.40', 309);
    g.bars(386, 3.6, 2.5, [[313, 345, 14, 4, 'g'], [345, 380, -3, -14, 'p'], [380, 400, -13, -3, 'g'], [400, 425, -4, -3, 'p'], [430, 696, 1.5, 2.5, 'p'], [520, 540, -1.5, -2.5, 'g'], [640, 696, -1, 2, 'g']]);
    g.line([[313, 378], [350, 385], [380, 405], [400, 417], [430, 405], [470, 385], [560, 385], [696, 384]], '#d040b0');
    g.line([[313, 382], [370, 388], [410, 408], [450, 395], [500, 386], [696, 385]], '#2a30d0');
    [['14:00', 332], ['22:00', 412], ['00:00', 498], ['09:00', 586], ['13:30', 682]].forEach(function (a) { g.t(a[1], 427, a[0], C.ax); });
    g.done();
  })();

  /* ---- top middle chart ---- */
  (function () {
    var g = chart('c2', 900, 20, 2.75, 3, 12345), xl = 108, xr = 1558;
    g.axis(xl, xr, 287, '1200', 103); g.axis(xl, xr, 853, '1150', 103);
    g.box(360, 432, 1087, 136, C.gray);
    g.box(832, 650, 615, 9, '#3a3a3a');
    g.h(388, 370, 1450, '#6e6e6e');
    g.h(388, 1513, 1558, '#999');
    g.h(104, xl, xr, '#e0bfe0', 1.5, '3 1');
    g.h(702, xl, xr, '#c8a0d0', 2);
    g.t(1510, 107, '预警', C.ax); g.t(1510, 703, '价警', C.ax);
    g.h(568, 370, 1445, '#38c038', 1.2);
    g.v(368, 1015, 1037, '#888');
    g.candles([[110, 130], [125, 190], [145, 190], [160, 210], [185, 215], [205, 240], [220, 295], [235, 270], [255, 280], [268, 340], [285, 330], [302, 375], [320, 370], [338, 345], [350, 400], [362, 430], [372, 570], [375, 740], [386, 852], [408, 875], [425, 835], [443, 835], [457, 880], [478, 975], [490, 955], [510, 935], [538, 935], [560, 930], [582, 845], [607, 835], [620, 905], [635, 925], [655, 870], [680, 870], [700, 850], [740, 850], [770, 845], [800, 810], [825, 700], [845, 470], [865, 490], [880, 515], [900, 480], [920, 510], [935, 435], [960, 425], [975, 525], [990, 480], [1005, 440], [1020, 510], [1040, 590], [1065, 540], [1090, 520], [1113, 575], [1135, 515], [1150, 480], [1170, 470], [1210, 500], [1225, 440], [1240, 465], [1270, 335], [1300, 340], [1335, 300], [1358, 320], [1370, 430], [1395, 395], [1420, 365], [1442, 385]], 11.6, 4, 14, 32);
    g.line([[218, 75], [330, 100], [370, 112], [480, 190], [620, 285], [760, 350], [830, 378], [900, 385], [1000, 395], [1150, 415], [1240, 417], [1330, 405], [1445, 407]], '#a4d84c', 2);
    g.line([[110, 215], [220, 225], [300, 240], [360, 262], [420, 370], [500, 480], [600, 570], [680, 635], [780, 690], [820, 695]], '#6a3fc8', 1.6);
    g.line([[240, 232], [300, 270], [360, 320], [400, 440], [450, 600], [500, 720], [560, 800], [640, 845], [700, 850], [790, 850], [830, 820], [880, 700], [930, 610], [1000, 550], [1100, 540], [1200, 520], [1260, 470], [1310, 415], [1350, 390], [1445, 390]], THIN);
    g.line([[900, 660], [960, 625], [1040, 600], [1120, 590], [1210, 570], [1280, 530], [1340, 495], [1440, 475]], '#a63a30');
    g.line([[110, 215], [360, 228], [366, 480], [372, 720], [390, 765], [470, 800], [530, 845], [640, 850], [820, 845], [880, 780], [950, 750], [1100, 720], [1220, 700], [1370, 650], [1440, 640]], DASH, 0.8, '4 4');
    g.t(361, 416, '1175 - 1187', wh, 'start'); g.t(838, 680, '1168 - 1167', wh, 'start');
    [['1204', 1335, 220], ['1193', 960, 346], ['1189', 865, 393], ['1154', 595, 790]].forEach(function (a) { g.t(a[1], a[2], a[0], C.red); });
    [['1144', 384, 940], ['1137', 488, 1021], ['1171', 1053, 634], ['1186', 1370, 464]].forEach(function (a) { g.t(a[1], a[2], a[0], C.blue); });
    g.t(1490, 552, '1175.00', gn);
    g.t(130, 1018, '2天', tan); g.t(1527, 1018, '38秒', tan);
    g.leg(113, 58, [['·开盘价', tan], chev, ['均价', dim, 8], ['1168.80', wh], ups(), ['开盘', dmg, 2], ['1175.00', mg], ['昨收盘', dim, 7], ['1187.00', wh], ['ZERO', mg, 7], ['1198.00', mg], ['MA20', yel, 7], ['1190.86', yel], ups(), ['MA60', rd, 2], ['1183.49', rd], ups()]);
    g.frame(xl, xr, [38, 1037, 1265, 1487]);
    g.leg(118, 1058, [['CJL', tan], chev, ['成交量', dim, 10], ['14713.00', wh], ['持仓量', dim, 8], ['992193.00', wh]]);
    g.t(103, 1082, '14万', C.ax, 'end'); g.axis(xl, xr, 1167, '69000', 103); g.t(103, 1253, '0', C.ax, 'end');
    g.vol(113, 1445, 20, 1263, 48, 4, [[373, 181, false], [408, 63, false], [478, 108, false], [842, 148, true], [965, 70, false], [1370, 70, false], [865, 70, false], [358, 42, false]]);
    g.line([[118, 1162], [200, 1155], [360, 1167], [385, 1130], [440, 1100], [560, 1085], [620, 1098], [800, 1110], [845, 1152], [1000, 1150], [1200, 1145], [1300, 1160], [1370, 1163], [1440, 1156]], '#bbb');
    g.leg(118, 1283, lonLeg('215.20', '232.74', '215.20', '7.00', '5.43', [0, 0, 0, 1, 1]));
    g.t(103, 1356, '0', C.ax, 'end'); g.axis(xl, xr, 1428, '-500', 103);
    g.lon(113, 1442, 11, 1356, [[110, 1335], [200, 1335], [360, 1356], [390, 1410], [450, 1450], [540, 1475], [590, 1470], [700, 1435], [820, 1400], [890, 1335], [950, 1310], [1020, 1308], [1100, 1320], [1300, 1312], [1440, 1322]], 40);
    [[162, '#3cb03c'], [572, '#e03020'], [1032, '#3cb03c'], [1170, '#e040c0', 1], [1195, '#3cb03c'], [1228, '#e040c0', 1], [1243, '#3cb03c'], [1263, '#e040c0', 1], [1372, '#3cb03c']].forEach(function (a) { g.mark(a[0], 1340, a[1], a[1] === '#3cb03c' ? 'd' : 'u', a[2]); });
    g.v(368, 1467, 1487, '#888');
    [['14:00', 179], ['22:00', 437], ['10:00', 1067], ['13:30', 1389]].forEach(function (a) { g.t(a[1], 1509, a[0], C.ax); });
    g.done();
  })();

  /* ---- top right chart ---- */
  (function () {
    var g = chart('c3', 1470, 20, 3, 3, 777), xl = 127, xr = 1350;
    g.v(3, 0, 1500, '#3a1412');
    g.axis(xl, xr, 322, '1300', 120); g.axis(xl, xr, 738, '1200', 120); g.h(673, xl, xr, C.grid, 1, '2 3');
    g.box(472, 165, 240, 198, C.gray);
    g.box(1080, 790, 270, 50, C.gray);
    g.box(478, 365, 237, 318, null, '#333');
    g.line([[720, 790], [1085, 790], [1085, 683], [855, 683]], '#666', 1);
    g.h(671, 933, xr, '#d890d8', 1.2);
    g.h(889, 127, 515, '#eee', 1, '2 2');
    g.h(889, 515, xr, '#d890d8', 1.2);
    g.line([[1088, 1035], [1088, 840], [1350, 840]], '#38b038', 1.2);
    g.candles([[130, 670], [150, 630], [180, 565], [200, 560], [230, 505], [245, 435], [262, 430], [295, 455], [310, 485], [340, 455], [370, 428], [400, 400], [420, 395], [438, 415], [458, 380], [472, 365], [486, 255], [500, 255], [517, 250], [535, 200], [550, 375], [565, 365], [582, 475], [600, 430], [615, 430], [630, 680], [645, 670], [660, 692], [680, 665], [695, 705], [720, 670], [742, 695], [775, 690], [790, 715], [805, 760], [835, 715], [855, 665], [870, 705], [885, 680], [900, 715], [920, 740], [950, 755], [965, 730], [983, 745], [997, 690], [1015, 700], [1030, 705], [1046, 725], [1063, 770], [1078, 790], [1094, 840], [1097, 940], [1111, 990], [1130, 965], [1159, 950], [1190, 940], [1205, 880], [1225, 790], [1255, 800], [1270, 825], [1286, 845], [1305, 810], [1340, 760]], 16, 4, 8, 30);
    g.candle(486, 165, 255, 130, 305, 4); g.candle(517, 160, 250, 120, 285, 4); g.candle(550, 197, 375, 197, 420, 4); g.candle(630, 478, 680, 478, 800, 4); g.candle(1094, 840, 940, 840, 965, 4);
    g.arrow(420, 645, 458, '#d890d8'); g.arrow(275, 757, 754, '#d890d8');
    [['1338 - 1290', 472, 149], ['1213 - 1212', 712, 666], ['1175 - 1187', 1082, 773], ['1168 - 1167', 1216, 892]].forEach(function (a) { g.t(a[1], a[2], a[0], wh, 'start'); });
    [['1350', 500, 98], ['1290', 245, 347], ['1224', 869, 618], ['1222', 996, 628], ['1230', 1335, 702]].forEach(function (a) { g.t(a[1], a[2], a[0], C.red); });
    [['1185', 628, 818], ['1185', 772, 818], ['1182', 980, 830], ['1137', 1124, 1018]].forEach(function (a) { g.t(a[1], a[2], a[0], C.blue); });
    g.t(148, 1015, '4天', tan);
    g.leg(137, 58, kLeg('1175.00', '1187.00', '1198.00'));
    g.frame(xl, xr, [38, 1035, 1267, 1485]);
    g.leg(137, 1055, lonLeg('-461.05', '-677.32', '-461.05', '7.00', '11.57', [1, 1, 1, 0, 0]));
    g.axis(xl, xr, 1082, '4000', 120); g.axis(xl, xr, 1145, '2000', 120); g.axis(xl, xr, 1208, '0', 120);
    g.lon(133, 1350, 17, 1208, [[133, 1155], [200, 1130], [270, 1100], [340, 1093], [420, 1093], [480, 1090], [510, 1082], [560, 1083], [620, 1115], [700, 1155], [800, 1185], [900, 1200], [1000, 1212], [1080, 1215], [1130, 1245], [1200, 1255], [1280, 1245], [1350, 1230]], 40);
    g.mark(455, 1192, '#3cb03c', 'd'); g.mark(485, 1190, '#e040c0', 'u', 1); g.mark(567, 1192, '#3cb03c', 'd'); g.mark(1223, 1192, '#e03020', 'u');
    g.leg(137, 1285, macdLeg('-0.70', '-5.42'));
    g.axis(xl, xr, 1334, '20', 120); g.axis(xl, xr, 1392, '0', 120); g.axis(xl, xr, 1453, '-20', 120);
    g.bars(1392, 16, 3.9, [[127, 195, 24, 30, 'p'], [207, 207, 30, 30, 'g'], [223, 239, 30, 32, 'p'], [255, 271, 36, 32, 'g'], [287, 335, 20, 6, 'g'], [351, 460, 3, -4, 'g'], [480, 512, 8, 15, 'p'], [512, 512, 15, 15, 'g'], [528, 528, 17, 17, 'p'], [544, 670, -6, -85, 'g'], [672, 860, -85, -5, 'p'], [880, 940, 3, 3, 'g'], [960, 1030, 6, 14, 'p'], [1040, 1070, 14, 8, 'g'], [1090, 1130, -15, -30, 'g'], [1140, 1200, -28, -10, 'p'], [1215, 1270, 10, 28, 'p'], [1286, 1286, 25, 25, 'g'], [1302, 1350, 28, 30, 'p']]);
    g.line([[130, 1350], [270, 1312], [300, 1312], [480, 1325], [530, 1312], [600, 1350], [660, 1392], [720, 1400], [790, 1440], [980, 1425], [1050, 1418], [1150, 1450], [1200, 1453], [1350, 1405]], '#c040a0');
    g.line([[130, 1360], [300, 1320], [480, 1322], [560, 1315], [700, 1390], [800, 1420], [1000, 1430], [1200, 1445], [1350, 1420]], '#2a30d0');
    g.v(1087, 1240, 1267, '#777'); g.v(1087, 1465, 1485, '#777');
    g.t(715, 1509, '2024/10/08', C.ax); g.t(1087, 1509, '2024/10/09', C.ax);
    g.done();
  })();

  /* ---- bottom left chart ---- */
  (function () {
    var g = chart('c4', 340, 530, 3, 3, 9871), xl = 124, xr = 1671;
    g.axis(xl, xr, 474, '10.00', 118); g.axis(xl, xr, 692, '5.00', 118);
    g.box(864, 385, 120, 343, C.gray);
    g.box(990, 322, 292, 50, C.gray);
    g.box(1285, 775, 300, 20, C.gray);
    g.box(575, 727, 290, 146, null, '#555');
    g.box(275, 873, 295, 10, null, '#555');
    g.box(990, 372, 293, 400, null, '#333');
    g.h(797, 1287, xr, '#38b038', 1.5); g.v(1287, 797, 838, '#38b038', 1.5);
    g.candles([[130, 878], [250, 885], [300, 878], [400, 880], [560, 875], [590, 870], [740, 868], [760, 850], [820, 840], [835, 785], [860, 770]], 15, 2, 4, 5);
    g.candle(866, 770, 700, 690, 770, 3); g.candle(871, 700, 330, 125, 700, 3);
    g.candles([[878, 300], [885, 260], [900, 270], [905, 390], [915, 465], [940, 400], [960, 460], [975, 430], [985, 380]], 7, 2.5, 18, 30);
    g.candle(991, 322, 650, 322, 655, 3);
    g.candles([[995, 650], [1015, 690], [1035, 725], [1050, 705], [1085, 715], [1110, 760], [1145, 690], [1170, 730], [1195, 770], [1230, 770], [1245, 740], [1285, 775], [1290, 830], [1330, 855], [1400, 835]], 10, 2.5, 6, 8);
    [['0.55 - 0.55', 272, 867], ['0.80 - 0.80', 568, 857], ['12.00 - 4.15', 865, 368], ['13.50 - 12.35', 985, 304], ['2.50 - 3.10', 1280, 756], ['2.50 - 2.90', 1285, 770]].forEach(function (a) { g.t(a[1], a[2], a[0], wh, 'start'); });
    [['18.00', 872, 107], ['5.20', 1143, 664], ['0.80', 345, 855], ['0.80', 575, 850]].forEach(function (a) { g.t(a[1], a[2], a[0], C.red); });
    [['0.40', 230, 911], ['0.60', 455, 902], ['3.30', 1103, 785], ['1.15', 1327, 878]].forEach(function (a) { g.t(a[1], a[2], a[0], C.blue); });
    g.t(147, 908, '8天', tan);
    g.leg(135, 68, kLeg('2.50', '3.10', '6.47'));
    g.frame(xl, xr, [48, 928, 1212, 1495]);
    g.leg(135, 948, lonLeg('-2.98', '-3.40', '-2.98', '0.05', '0.12', [1, 1, 1, 0, 0]));
    g.axis(xl, xr, 980, '5.00', 118); g.axis(xl, xr, 1076, '0.00', 118); g.axis(xl, xr, 1171, '-5.00', 118);
    g.lon(127, 1390, 9, 1076, [[124, 1058], [180, 1070], [260, 1087], [310, 1082], [370, 1060], [420, 1053], [520, 1060], [660, 1068], [750, 1070], [820, 1062], [870, 1010], [910, 975], [980, 975], [1010, 1020], [1060, 1110], [1120, 1165], [1240, 1160], [1270, 1155], [1300, 1175], [1335, 1203], [1390, 1185]], 22);
    [[272, 'r'], [293, 'b'], [305, 'r'], [440, 'g'], [523, 'p'], [537, 'g'], [670, 'p'], [682, 'g'], [750, 'p'], [953, 'g'], [1137, 'r'], [1190, 'b'], [1241, 'r'], [1287, 'b'], [1360, 'r']].forEach(function (a) {
      var m = { r: '#e03020', b: '#2a5ad8', g: '#3cb03c', p: '#e040c0' };
      g.mark(a[0], 1056, m[a[1]], a[1] === 'b' || a[1] === 'g' ? 'd' : 'u', a[1] === 'p' || a[1] === 'b');
    });
    g.v(1285, 905, 928, '#777'); g.v(1285, 1190, 1212, '#777'); g.v(1285, 1475, 1495, '#777');
    g.leg(135, 1233, macdLeg('-0.21', '-0.29'));
    g.axis(xl, xr, 1309, '2.00', 118); g.axis(xl, xr, 1393, '0.00', 118); g.axis(xl, xr, 1476, '-2.00', 118);
    g.bars(1393, 7.5, 2, [[124, 750, 1, 1, 'p'], [755, 820, 3, 10, 'p'], [825, 895, 12, 128, 'p'], [900, 945, 102, 5, 'g'], [950, 985, -4, -20, 'p'], [990, 1035, -30, -92, 'g'], [1040, 1130, -85, -3, 'p'], [1135, 1180, 3, 6, 'p'], [1240, 1280, 4, 8, 'p'], [1285, 1315, -3, -6, 'g'], [1320, 1390, -8, 6, 'p']]);
    g.line([[124, 1393], [800, 1393], [870, 1350], [900, 1258], [980, 1305], [1025, 1393], [1090, 1430], [1150, 1420], [1260, 1415], [1330, 1430], [1390, 1420]], '#c040a0');
    g.line([[124, 1393], [830, 1390], [900, 1330], [940, 1283], [990, 1300], [1060, 1380], [1110, 1420], [1260, 1420], [1390, 1420]], '#2a30d0');
    [['2024/09/26', 275], ['2024/10/08', 868], ['2024/10/09', 1284]].forEach(function (a) { g.t(a[1], 1518, a[0], C.ax); });
    g.t(1635, 925 - 18, '39秒', tan);
    g.done();
  })();

  /* ---- bottom middle chart ---- */
  (function () {
    var g = chart('c5', 900, 530, 2.75, 3, 3141), xl = 115, xr = 1558;
    g.v(3, 48, 1495, '#3a1412');
    g.axis(xl, xr, 375, '555.0', 108);
    g.box(1210, 358, 240, 15, '#3a3a3a');
    g.h(223, 1525, 1558, '#999');
    g.candles([[340, 640], [385, 490], [410, 420], [436, 400], [440, 490], [465, 330], [480, 340], [500, 300], [515, 320], [530, 460], [560, 380], [577, 310], [610, 300], [625, 370], [640, 380], [655, 460], [670, 540], [700, 480], [735, 400], [755, 450], [780, 420], [810, 430], [825, 510], [850, 490], [875, 470], [885, 370], [910, 310], [930, 280], [955, 340], [975, 330], [1000, 175], [1017, 260], [1050, 290], [1085, 310], [1090, 440], [1110, 420], [1130, 320], [1145, 410], [1160, 450], [1190, 370], [1212, 395], [1228, 340], [1245, 295], [1270, 310], [1300, 335], [1320, 250], [1345, 245], [1368, 190], [1385, 240], [1410, 235], [1440, 185], [1450, 220]], 11.6, 3.5, 22, 30);
    g.line([[225, 88], [300, 150], [400, 205], [580, 235], [700, 265], [880, 303], [1100, 303], [1220, 315], [1340, 310], [1450, 300]], '#a4d84c', 2);
    g.line([[118, 120], [190, 260], [300, 430], [390, 485]], '#6a3fc8', 1.5);
    g.line([[640, 410], [720, 435], [880, 445]], '#6a3fc8', 1.5);
    g.line([[1090, 368], [1180, 372]], '#6a3fc8', 1.5);
    g.line([[400, 485], [520, 430], [640, 410], [720, 435], [860, 445], [950, 400], [1060, 365], [1200, 370], [1310, 345], [1450, 302]], '#a63a30');
    g.line([[118, 375], [180, 560], [300, 620], [520, 430], [610, 370], [680, 430], [720, 450], [860, 465], [900, 440], [1000, 350], [1090, 305], [1150, 350], [1210, 372], [1290, 345], [1340, 285], [1450, 245]], THIN);
    g.line([[118, 485], [200, 575], [580, 545], [800, 535], [1100, 510], [1450, 490]], DASH, 0.8, '5 4');
    g.t(1217, 390, '555.3 - 555.1', wh, 'start');
    [['559.1', 998, 108], ['557.2', 576, 222], ['556.6', 488, 262], ['555.3', 734, 342], ['558.3', 1360, 155]].forEach(function (a) { g.t(a[1], a[2], a[0], C.red); });
    [['553.2', 540, 508], ['553.7', 1155, 478]].forEach(function (a) { g.t(a[1], a[2], a[0], C.blue); });
    g.t(1490, 213, '557.40', gn);
    g.leg(125, 68, [['开盘价', tan], chev, ['均价', dim, 8], ['553.16', wh], ups(), ['开盘', dmg, 2], ['557.40', mg], ['昨收盘', dim, 7], ['562.00', wh], ['ZERO', mg, 7], ['569.50', mg], ['MA20', yel, 7], ['557.14', yel], ups(), ['MA60', rd, 2], ['556.23', rd], ups(), ['MA180', '#9fd24a', 2], ['556.26', '#9fd24a'], ups()]);
    g.frame(xl, xr, [48, 927, 1212, 1495]);
    g.vol(1075, 1445, 20, 1210, 30, 4, [[1290, 72, false], [1370, 62, false]]);
    g.line([[1075, 1080], [1200, 1072], [1300, 1090], [1450, 1078]], '#bbb');
    g.lon(1075, 1445, 11, 1360, [[1075, 1335], [1200, 1310], [1300, 1315], [1445, 1335]], 30);
    g.t(1389, 1518, '13:30', C.ax);
    g.t(1527, 921, '39秒', tan);
    g.done();
  })();

  /* ---- bottom right chart ---- */
  (function () {
    var g = chart('c6', 1470, 530, 3, 3, 2718), xl = 133, xr = 1350;
    g.v(6, 48, 1495, '#6e2622');
    g.axis(xl, xr, 440, '560.0', 127); g.axis(xl, xr, 658, '540.0', 127); g.h(403, xl, xr, C.grid, 1, '2 3');
    g.box(217, 825, 358, 30, C.gray);
    g.box(572, 222, 150, 390, C.gray);
    g.box(722, 125, 350, 97, C.gray);
    g.box(717, 587, 633, 27, C.gray);
    g.box(1072, 420, 278, 47, C.gray);
    g.box(222, 620, 353, 235, null, '#444');
    g.box(720, 222, 352, 196, null, '#333');
    g.h(468, 1082, xr, '#38b038', 1.5);
    g.line([[133, 328], [1350, 80]], '#e0a0e0', 1.2); g.line([[133, 493], [1350, 245]], '#e0a0e0', 1.2);
    g.h(222, 575, 722, '#eee', 1, '2 2');
    g.candles([[135, 855], [165, 820], [180, 810], [205, 805], [215, 820], [245, 870], [265, 860], [300, 835], [330, 815], [350, 790], [380, 800], [400, 840], [415, 830], [428, 795], [440, 730], [456, 735], [468, 770], [490, 740], [520, 725], [535, 670], [552, 705], [570, 640]], 13, 3, 6, 16);
    g.candle(724, 125, 330, 125, 420, 3.5);
    g.candles([[726, 330], [745, 360], [770, 405], [790, 385], [815, 405], [830, 395], [860, 450], [880, 385], [905, 365], [918, 415], [940, 380], [965, 420], [995, 410], [1010, 425], [1040, 395], [1060, 430], [1070, 420]], 13, 3, 8, 15);
    g.candle(1081, 470, 545, 470, 545, 3);
    g.candles([[1084, 545], [1100, 565], [1125, 555], [1135, 575], [1150, 520], [1170, 490], [1205, 485], [1215, 520], [1240, 500], [1255, 510], [1290, 465], [1320, 490], [1350, 480]], 11, 3, 7, 12);
    g.arrow(905, 1032, 452, '#e0a0e0'); g.arrow(1150, 1245, 402, '#e0a0e0');
    [['589.0', 705, 108], ['580.1', 562, 204], ['569.5', 907, 320], ['534.4', 436, 700], ['529.1', 348, 758], ['557.2', 1195, 452], ['559.1', 1290, 431], ['558.3', 1355, 440]].forEach(function (a) { g.t(a[1], a[2], a[0], C.red); });
    [['589.0 - 580.1', 718, 110], ['580.1 - 543.5', 575, 206], ['546.5 - 544.0', 577, 633], ['521.8 - 524.4', 218, 809], ['557.4 - 562.8', 1072, 402]].forEach(function (a) { g.t(a[1], a[2], a[0], wh, 'start'); });
    [['560.9', 771, 450], ['557.5', 857, 487], ['522.1', 396, 872], ['546.5', 1126, 607], ['551.0', 1251, 557], ['518.5', 223, 910]].forEach(function (a) { g.t(a[1], a[2], a[0], C.blue); });
    g.t(157, 908, '5天', tan);
    g.leg(146, 68, kLeg('557.40', '562.00', '569.50'));
    g.frame(xl, xr, [48, 928, 1200, 1495]);
    g.leg(146, 948, lonLeg('6.52', '3.99', '6.52', '1.00', '1.54', [1, 1, 1, 0, 0]));
    g.axis(xl, xr, 1017, '50.0', 127); g.axis(xl, xr, 1100, '0.0', 127); g.axis(xl, xr, 1181, '-50.0', 127);
    g.lon(138, 1350, 9, 1100, [[135, 1160], [200, 1125], [260, 1132], [320, 1120], [380, 1085], [440, 1065], [540, 1030], [620, 975], [700, 975], [760, 1060], [810, 1120], [870, 1155], [930, 1155], [1070, 1137], [1090, 1170], [1135, 1192], [1190, 1140], [1300, 1095], [1350, 1098]], 25);
    [[243, 'b'], [274, 'r'], [678, 'g'], [907, 'r'], [1078, 'b'], [1158, 'r']].forEach(function (a) {
      var m = { r: '#e03020', b: '#2a5ad8', g: '#3cb03c' };
      g.mark(a[0], 1080, m[a[1]], a[1] === 'r' ? 'u' : 'd', a[1] === 'b');
    });
    g.v(1075, 905, 928, '#777'); g.v(1075, 1178, 1200, '#777'); g.v(1075, 1475, 1495, '#777');
    g.leg(146, 1222, macdLeg('0.28', '-0.16'));
    g.axis(xl, xr, 1294, '10.0', 127); g.axis(xl, xr, 1406, '0.0', 127);
    g.bars(1406, 8, 2.2, [[135, 155, 8, 15, 'p'], [160, 215, 18, 8, 'g'], [225, 330, -2, 2, 'g'], [335, 400, 5, 8, 'p'], [405, 430, -3, 2, 'g'], [435, 500, 10, 15, 'p'], [505, 570, 15, 30, 'p'], [575, 610, 65, 115, 'p'], [612, 690, 115, 5, 'g'], [700, 778, -5, -80, 'g'], [780, 890, -75, -20, 'p'], [895, 1060, -8, -2, 'g'], [1075, 1100, -15, -35, 'g'], [1105, 1160, -35, -10, 'p'], [1170, 1210, 6, 12, 'p'], [1215, 1255, 12, 8, 'g'], [1260, 1300, 10, 15, 'p'], [1305, 1350, 12, 6, 'g']]);
    g.line([[135, 1415], [300, 1405], [540, 1375], [580, 1320], [640, 1247], [700, 1265], [800, 1370], [900, 1405], [1075, 1408], [1130, 1445], [1200, 1420], [1350, 1408]], '#c040a0');
    g.line([[135, 1410], [500, 1385], [600, 1330], [680, 1263], [740, 1285], [860, 1385], [950, 1405], [1080, 1410], [1140, 1440], [1350, 1410]], '#2a30d0');
    [['2024/09/27', 220], ['2024/10/08', 718], ['2024/10/09', 1075]].forEach(function (a) { g.t(a[1], 1518, a[0], C.ax); });
    g.done();
  })();
})();
```
